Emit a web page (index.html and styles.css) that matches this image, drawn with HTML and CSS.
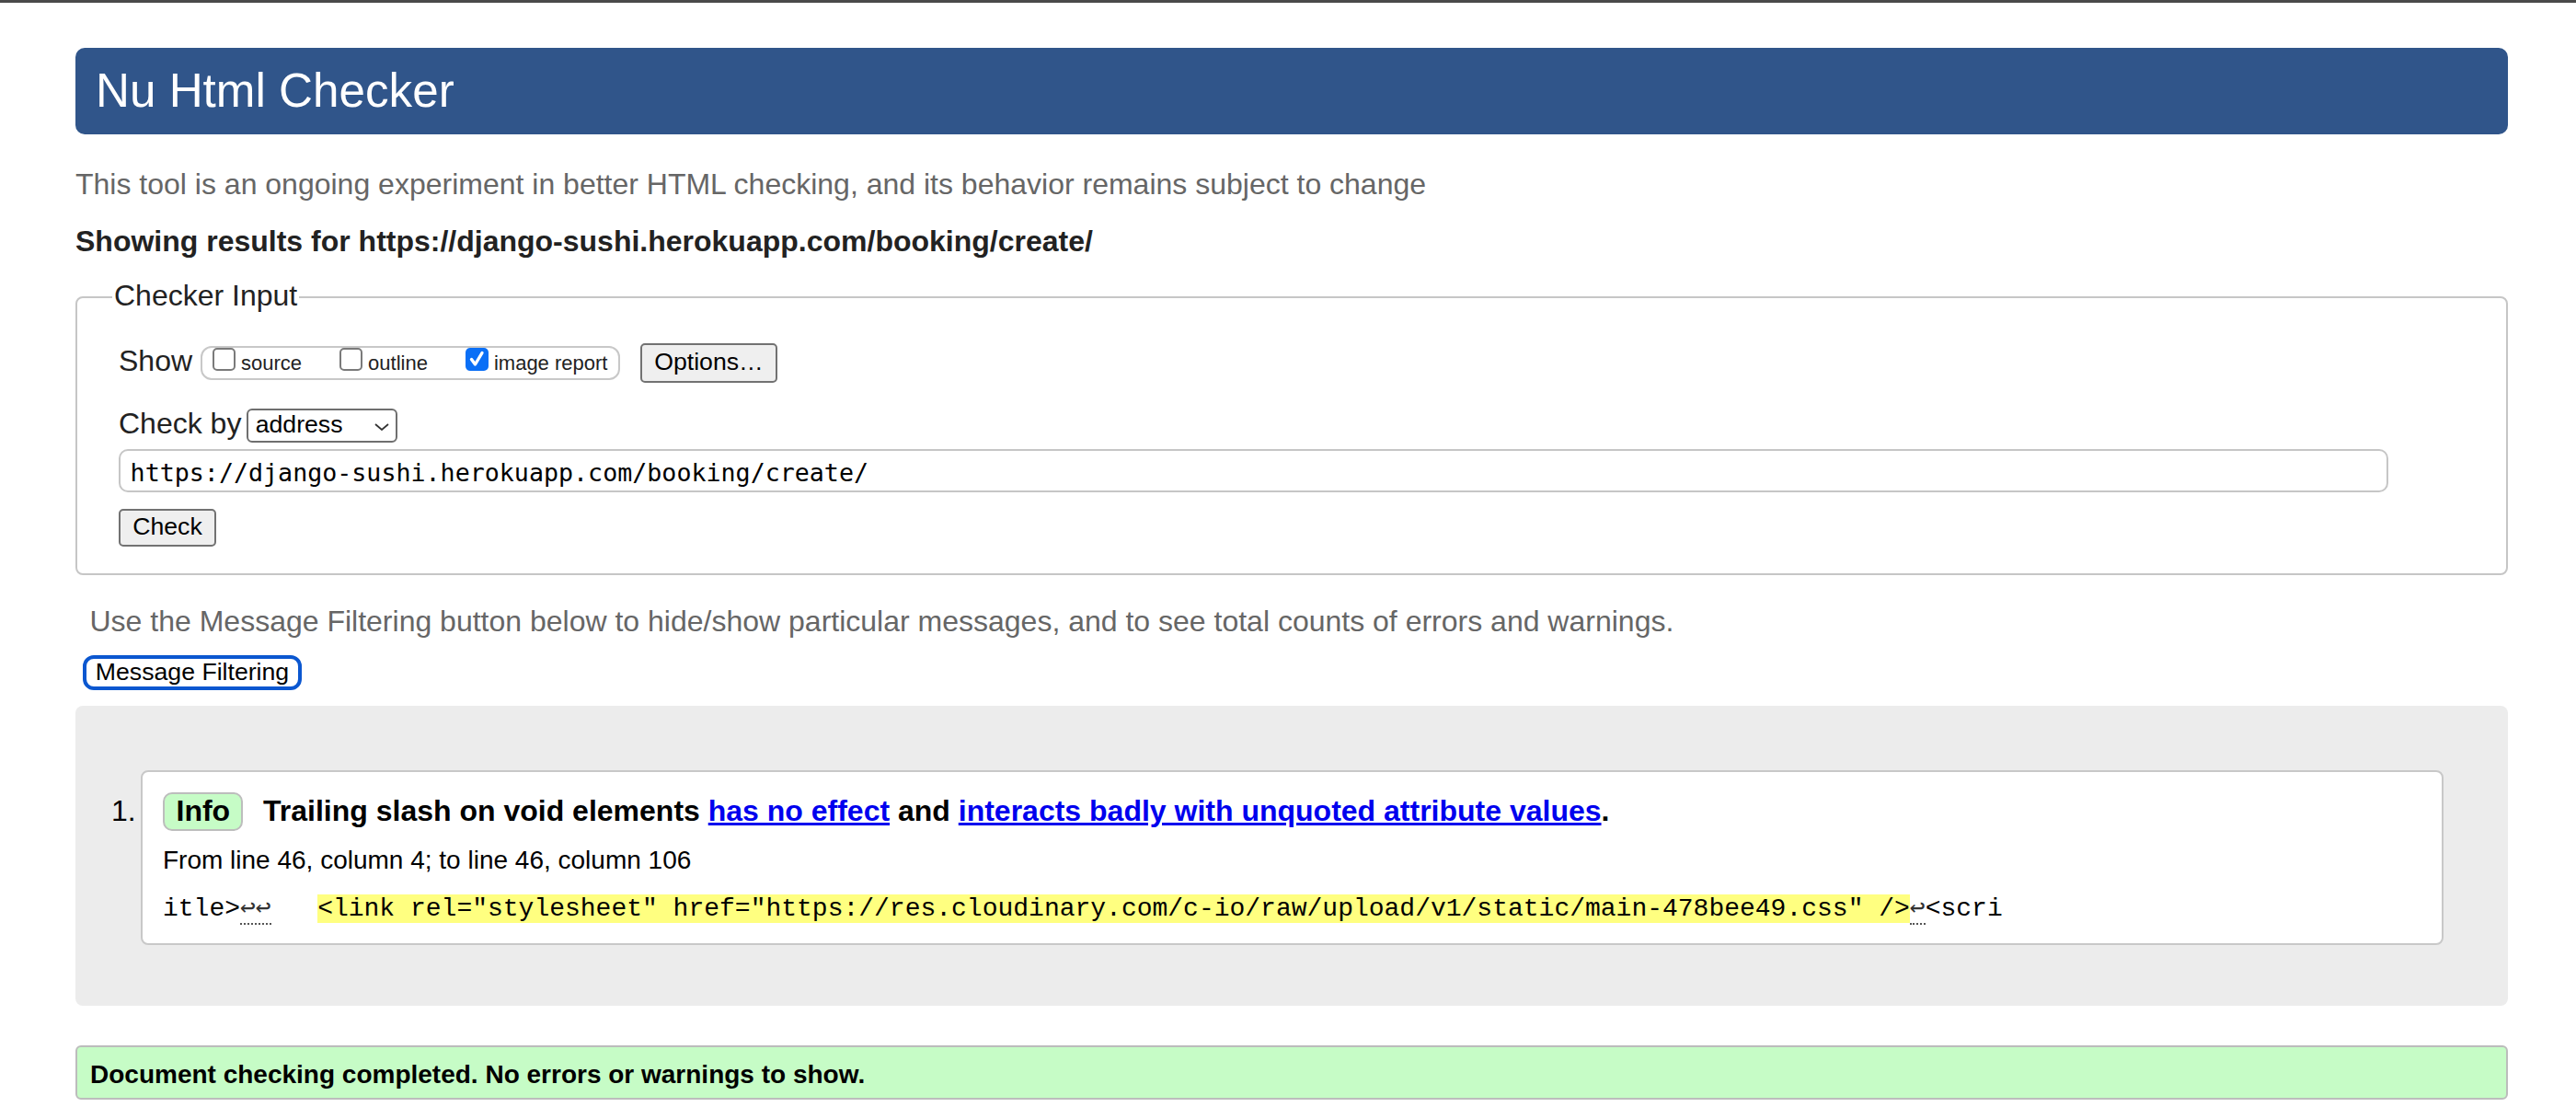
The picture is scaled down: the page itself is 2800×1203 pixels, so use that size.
FILE: index.html
```html
<!DOCTYPE html>
<html lang="en">
<head>
<meta charset="utf-8">
<title>Nu Html Checker</title>
<link rel="stylesheet" href="styles.css">
</head>
<body>
<div class="topbar"></div>
<div class="page">
  <h1 class="title">Nu Html Checker</h1>
  <p class="intro">This tool is an ongoing experiment in better HTML checking, and its behavior remains subject to change</p>
  <p class="showing">Showing results for https://django-sushi.herokuapp.com/booking/create/</p>

  <fieldset class="checker">
    <legend class="legend">Checker Input</legend>
    <div class="row row-show">
      <span class="label">Show</span>
      <span class="group">
        <span class="opt"><span class="cb"></span><span class="opt-text">source</span></span>
        <span class="opt"><span class="cb"></span><span class="opt-text">outline</span></span>
        <span class="opt"><span class="cb cb-on"><svg class="tick" viewBox="0 0 25 25" width="25" height="25"><path d="M6.5 12.5 L10.5 18 L18 5.5" fill="none" stroke="#fff" stroke-width="3.4" stroke-linecap="round" stroke-linejoin="round"/></svg></span><span class="opt-text">image report</span></span>
      </span>
      <button class="btn btn-options" type="button">Options…</button>
    </div>
    <div class="row row-by">
      <span class="label">Check by</span>
      <span class="select"><span class="select-text">address</span><svg class="chev" viewBox="0 0 16 8" width="16" height="8"><polyline points="1,1 8,7 15,1" fill="none" stroke="#333" stroke-width="1.8"/></svg></span>
    </div>
    <div class="url">https://django-sushi.herokuapp.com/booking/create/</div>
    <button class="btn btn-check" type="button">Check</button>
  </fieldset>

  <p class="hint">Use the Message Filtering button below to hide/show particular messages, and to see total counts of errors and warnings.</p>
  <button class="filter" type="button">Message Filtering</button>

  <div class="results">
    <ol class="messages">
      <li class="card">
        <p class="msg"><span class="badge">Info</span> Trailing slash on void elements <a class="link" href="#">has no effect</a> and <a class="link" href="#">interacts badly with unquoted attribute values</a>.</p>
        <p class="loc">From line 46, column 4; to line 46, column 106</p>
        <p class="extract">itle&gt;<span class="lfs">↩↩</span>   <mark class="hl">&lt;link rel="stylesheet" href="https://res.cloudinary.com/c-io/raw/upload/v1/static/main-478bee49.css" /&gt;</mark><span class="lfs">↩</span>&lt;scri</p>
      </li>
    </ol>
  </div>

  <div class="success">Document checking completed. No errors or warnings to show.</div>
</div>
</body>
</html>
```

FILE: styles.css
```css
html, body {
  margin: 0;
  padding: 0;
  background: #ffffff;
}

body {
  font-family: "Liberation Sans", Arial, Helvetica, sans-serif;
  color: #222222;
}

.topbar {
  height: 3px;
  background: #4a4a4a;
}

.page {
  padding: 0 74px 0 82px;
}

.title {
  margin: 49px 0 0;
  height: 94px;
  line-height: 94px;
  padding-left: 22px;
  background: #30558a;
  border-radius: 10px;
  color: #ffffff;
  font-size: 51.2px;
  font-weight: normal;
}

.intro {
  margin: 36px 0 0;
  font-size: 32px;
  line-height: 36px;
  color: #666666;
}

.showing {
  margin: 26px 0 0;
  font-size: 32px;
  line-height: 36px;
  font-weight: bold;
  color: #222222;
}

/* Checker input fieldset */
.checker {
  margin: 23px 0 0;
  padding: 30.3px 0 29px 45px;
  border: 2px solid #c6c6c6;
  border-radius: 8px;
  min-inline-size: 0;
}

.legend {
  margin-left: -7px;
  padding: 0 2px 4px;
  font-size: 32px;
  line-height: 36px;
  color: #222222;
}

.row {
  display: flex;
  align-items: flex-start;
}

.row-show {
  height: 42.4px;
}

.label {
  font-size: 32px;
  line-height: 36px;
  color: #222222;
}

.row-show .label {
  margin-top: 1px;
}

.group {
  display: flex;
  align-items: flex-start;
  box-sizing: border-box;
  height: 37.6px;
  margin: 2.4px 0 0 8.5px;
  padding: 0 11.5px;
  border: 2px solid #c8c8c8;
  border-radius: 12px;
}

.opt {
  display: flex;
  align-items: flex-start;
  margin-right: 41px;
}

.opt:last-child {
  margin-right: 0;
}

.cb {
  display: block;
  box-sizing: border-box;
  width: 25px;
  height: 25px;
  margin-right: 6px;
  border: 2px solid #7a7a7a;
  border-radius: 5px;
  background: #ffffff;
}

.cb-on {
  border: none;
  background: #0a6ff6;
}

.tick {
  display: block;
}

.opt-text {
  margin-top: 6.4px;
  font-size: 22px;
  line-height: 22px;
  color: #222222;
}

.btn {
  box-sizing: border-box;
  border: 2px solid #727272;
  border-radius: 5px;
  background: #efefef;
  color: #000000;
  font-family: "Liberation Sans", Arial, Helvetica, sans-serif;
  font-size: 26.67px;
  text-align: center;
  margin: 0;
}

.btn-options {
  width: 149px;
  height: 42.4px;
  margin-left: 22px;
  padding: 0 0 1.4px;
  line-height: 37px;
}

.row-by {
  margin-top: 25.9px;
}

.select {
  display: flex;
  align-items: flex-start;
  justify-content: space-between;
  box-sizing: border-box;
  width: 164.3px;
  height: 36.7px;
  margin: 2.7px 0 0 5.3px;
  padding: 0 7px 0 8px;
  border: 2px solid #6f6f6f;
  border-radius: 6px;
  background: #ffffff;
}

.select-text {
  font-size: 26.67px;
  line-height: 30px;
  color: #000000;
}

.chev {
  display: block;
  margin-top: 13.7px;
}

.url {
  box-sizing: border-box;
  width: 2467px;
  height: 47.3px;
  margin-top: 6.7px;
  padding: 4px 0 0 10.6px;
  border: 2px solid #c6c6c6;
  border-radius: 10px;
  font-family: "DejaVu Sans Mono", monospace;
  font-size: 26.67px;
  line-height: 39.3px;
  color: #000000;
}

.btn-check {
  display: block;
  width: 106px;
  height: 41px;
  margin-top: 18px;
  padding: 0 0 2px;
  line-height: 35px;
}

.hint {
  margin: 32px 0 0 15.5px;
  font-size: 32px;
  line-height: 36px;
  color: #666666;
}

.filter {
  display: block;
  box-sizing: border-box;
  width: 238px;
  height: 38px;
  margin: 19px 0 0 8px;
  padding: 0 0 2px;
  border: 4px solid #0b57d0;
  border-radius: 12px;
  background: #ffffff;
  color: #000000;
  font-family: "Liberation Sans", Arial, Helvetica, sans-serif;
  font-size: 26.67px;
  line-height: 28px;
  text-align: center;
}

/* Results */
.results {
  margin-top: 17px;
  padding: 70px 70px 66px 71px;
  background: #ececec;
  border-radius: 8px;
}

.messages {
  margin: 0;
  padding: 0;
  list-style: decimal outside;
}

.card {
  padding: 22px 22px 21px;
  border: 2px solid #c8c8c8;
  border-radius: 8px;
  background: #ffffff;
  font-size: 32px;
  color: #000000;
}

.card::marker {
  content: counter(list-item) ".\2006";
}

.msg {
  margin: 0;
  font-size: 32px;
  line-height: 36px;
  font-weight: bold;
  color: #000000;
}

.badge {
  display: inline-block;
  padding: 0 12px 2px 12.5px;
  margin-right: 13px;
  line-height: 36px;
  border: 2px solid #bdbdbd;
  border-radius: 10px;
  background: #c6fcc6;
}

.link {
  color: #0000ee;
  text-decoration: underline;
}

.loc {
  margin: 16.3px 0 0;
  font-size: 28px;
  line-height: 32px;
  color: #000000;
}

.extract {
  margin: 20.5px 0 0;
  font-family: "Liberation Mono", "DejaVu Sans Mono", monospace;
  font-size: 28px;
  line-height: 32px;
  white-space: pre;
  color: #000000;
}

.lfs {
  border-bottom: 2px dotted #555555;
  color: #333333;
}

.hl {
  background: #ffff80;
  color: #000000;
}

.success {
  margin-top: 43px;
  padding: 14px 14px 9px;
  border: 2px solid #bcbcbc;
  border-radius: 6px;
  background: #c6fcc6;
  font-size: 28px;
  line-height: 32px;
  font-weight: bold;
  color: #000000;
}
```
